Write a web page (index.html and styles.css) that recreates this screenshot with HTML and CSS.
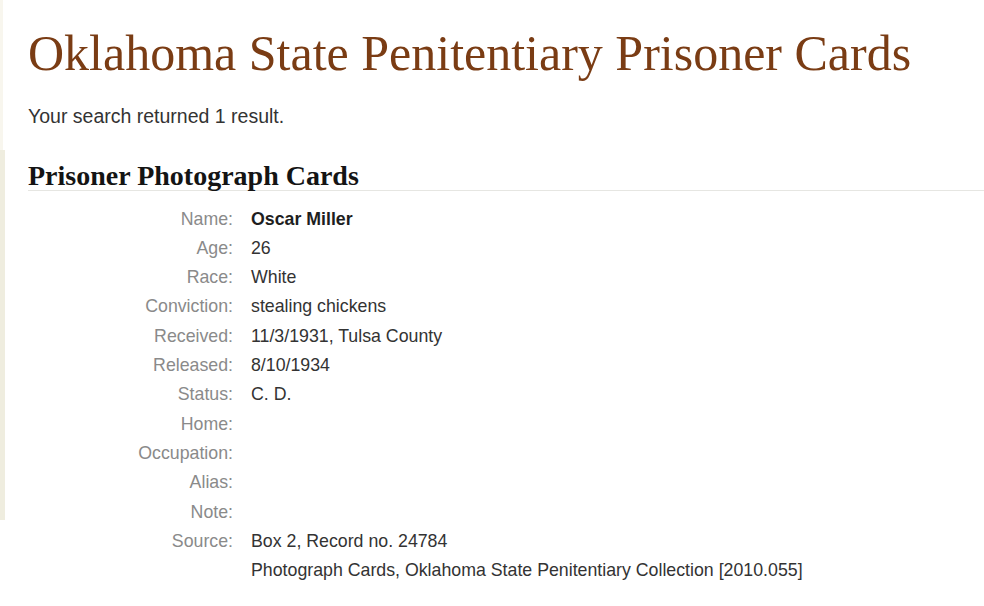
FILE: index.html
```html
<!DOCTYPE html>
<html lang="en">
<head>
<meta charset="utf-8">
<title>Oklahoma State Penitentiary Prisoner Cards</title>
<link rel="stylesheet" href="styles.css">
</head>
<body>
<div class="page">
  <aside class="edge">
    <div class="edge-top"></div>
    <div class="edge-mid"></div>
  </aside>
  <main class="main">
    <h1 class="title">Oklahoma State Penitentiary Prisoner Cards</h1>
    <p class="summary">Your search returned 1 result.</p>
    <h2 class="section">Prisoner Photograph Cards</h2>
    <dl class="record">
      <dt>Name:</dt><dd class="name">Oscar Miller</dd>
      <dt>Age:</dt><dd>26</dd>
      <dt>Race:</dt><dd>White</dd>
      <dt>Conviction:</dt><dd>stealing chickens</dd>
      <dt>Received:</dt><dd>11/3/1931, Tulsa County</dd>
      <dt>Released:</dt><dd>8/10/1934</dd>
      <dt>Status:</dt><dd>C. D.</dd>
      <dt>Home:</dt><dd></dd>
      <dt>Occupation:</dt><dd></dd>
      <dt>Alias:</dt><dd></dd>
      <dt>Note:</dt><dd></dd>
      <dt>Source:</dt><dd>Box 2, Record no. 24784<br>Photograph Cards, Oklahoma State Penitentiary Collection [2010.055]</dd>
    </dl>
  </main>
</div>
</body>
</html>
```

FILE: styles.css
```css
html, body {
  margin: 0;
  padding: 0;
  background: #ffffff;
}

.page {
  display: flex;
  min-height: 606px;
}

.edge {
  width: 6px;
  flex: 0 0 6px;
  display: flex;
  flex-direction: column;
}

.edge-top {
  height: 150px;
  width: 3px;
  background: #f8f6ee;
}

.edge-mid {
  height: 370px;
  width: 5px;
  background: #efeddf;
}

.main {
  flex: 1;
  padding-left: 22px;
}

.title {
  margin: 24px 0 0 0;
  font-family: "Liberation Serif", "Times New Roman", serif;
  font-weight: normal;
  font-size: 50px;
  line-height: 58px;
  color: #7a3c14;
}

.summary {
  margin: 22px 0 0 0;
  font-family: "Liberation Sans", Arial, sans-serif;
  font-size: 19.5px;
  line-height: 24px;
  color: #333333;
}

.section {
  margin: 33.5px 0 0 0;
  padding: 0;
  font-family: "Liberation Serif", "Times New Roman", serif;
  font-weight: bold;
  font-size: 28px;
  line-height: 28px;
  color: #141414;
  border-bottom: 1px solid #e6e6e2;
}

.record {
  margin: 14px 0 0 0;
  display: grid;
  grid-template-columns: 205px 1fr;
  column-gap: 18px;
  font-family: "Liberation Sans", Arial, sans-serif;
  font-size: 17.75px;
  line-height: 29.33px;
}

.record dt {
  text-align: right;
  color: #8a8a8a;
}

.record dd {
  margin: 0;
  color: #333333;
  min-height: 29.33px;
}

.record dd.name {
  font-weight: bold;
  color: #1e1e1e;
}
```
